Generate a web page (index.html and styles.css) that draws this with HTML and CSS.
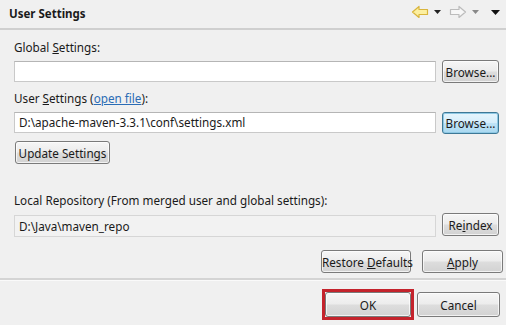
FILE: index.html
```html
<!DOCTYPE html>
<html lang="en">
<head>
<meta charset="utf-8"/>
<title>User Settings</title>
<link rel="stylesheet" href="styles.css">
</head>
<body>
<div class="dialog">
  <div class="header">
    <span class="title">User Settings</span>
    <div class="nav">
      <svg width="18" height="14" viewBox="0 0 18 14"><path d="M1.5 7 L8 1.5 V4.5 H16.5 V9.5 H8 V12.5 Z" fill="#fcefa0" stroke="#d9b53c" stroke-width="1.2" stroke-linejoin="round"/></svg>
      <svg class="drop" width="7" height="4" viewBox="0 0 7 4"><path d="M0 0 H7 L3.5 4 Z" fill="#222"/></svg>
      <svg width="18" height="14" viewBox="0 0 18 14"><path d="M16.5 7 L10 1.5 V4.5 H1.5 V9.5 H10 V12.5 Z" fill="#f7f7f7" stroke="#bcbcbc" stroke-width="1.2" stroke-linejoin="round"/></svg>
      <svg class="drop" width="7" height="4" viewBox="0 0 7 4"><path d="M0 0 H7 L3.5 4 Z" fill="#888"/></svg>
      <svg class="drop last" width="9" height="5" viewBox="0 0 9 5"><path d="M0 0 H9 L4.5 5 Z" fill="#111"/></svg>
    </div>
  </div>

  <div class="content">
    <label class="field-label first">Global <u>S</u>ettings:</label>
    <div class="field-row">
      <div class="text-field"></div>
      <button class="btn browse">Browse...</button>
    </div>

    <label class="field-label">User <u>S</u>ettings (<a href="#">open file</a>):</label>
    <div class="field-row">
      <div class="text-field">D:\apache-maven-3.3.1\conf\settings.xml</div>
      <button class="btn browse focused">Browse...</button>
    </div>

    <button class="btn update">Update Settings</button>

    <label class="field-label repo-label">Local Repository (From merged user and global settings):</label>
    <div class="field-row">
      <div class="text-field readonly">D:\Java\maven_repo</div>
      <button class="btn browse">Re<u>i</u>ndex</button>
    </div>

    <div class="defaults">
      <button class="btn restore">Restore <u>D</u>efaults</button>
      <button class="btn apply"><u>A</u>pply</button>
    </div>
  </div>

  <div class="footer">
    <div class="ok-frame"><button class="btn ok">OK</button></div>
    <button class="btn cancel">Cancel</button>
  </div>
</div>
</body>
</html>
```

FILE: styles.css
```css
body {
  margin: 0;
  background: #f0f0f0;
  font-family: 'Noto Sans', sans-serif;
  font-size: 11.7px;
  color: #1a1a1a;
}

.dialog {
  width: 506px;
  height: 325px;
  overflow: hidden;
}

.header {
  height: 30px;
  box-sizing: border-box;
  display: flex;
  align-items: center;
  justify-content: space-between;
  padding: 0 2px 0 9px;
  border-bottom: 2px solid #cfcfcf;
}

.title {
  font-weight: bold;
  font-size: 11.5px;
  margin-top: -2px;
}

.nav {
  display: flex;
  align-items: center;
  gap: 4px;
  margin-top: -4px;
}

.nav .drop {
  margin: 0 4px 0 1px;
}

.nav .last {
  margin-left: 4px;
}

.content {
  padding: 0 6px 0 14px;
  display: flex;
  flex-direction: column;
}

.field-label {
  display: block;
  height: 16px;
  line-height: 16px;
  margin-top: 7px;
}

.field-label.first {
  margin-top: 9px;
}

.field-label a {
  color: #2a6cb5;
  text-decoration: underline;
}

.field-row {
  display: flex;
  align-items: flex-start;
  margin-top: 6px;
  gap: 6px;
}

.text-field {
  flex: 1;
  height: 21px;
  box-sizing: border-box;
  background: #fff;
  border: 1px solid #c9c9c9;
  border-top-color: #b5b5b5;
  padding: 0 4px;
  line-height: 19px;
  white-space: nowrap;
}

.text-field.readonly {
  background: #f2f2f2;
  border-color: #d6d6d6;
  height: 22px;
  line-height: 20px;
  margin-top: 1px;
}

.btn {
  font-family: inherit;
  font-size: 11.7px;
  color: #1a1a1a;
  height: 23px;
  padding: 0 6px;
  white-space: nowrap;
  border: 1px solid #7a7a7a;
  border-radius: 3px;
  background: linear-gradient(#f6f6f6 0%, #ececec 48%, #dddddd 52%, #d2d2d2 100%);
  box-shadow: inset 0 0 0 1px rgba(255,255,255,0.7);
  cursor: pointer;
}

.browse {
  width: 57px;
  padding: 0;
  margin-top: -1px;
  margin-right: 1px;
}

.browse.focused {
  background: linear-gradient(#e6f5fd 0%, #d6eefb 48%, #bfe3f6 52%, #a9d8f0 100%);
  border-color: #3d7896;
  box-shadow: inset 0 0 0 1px #8ec8e4;
  height: 22px;
  margin-top: 0;
}

.update {
  align-self: flex-start;
  width: 95px;
  padding: 0;
  margin: 7px 0 0 1px;
}

.repo-label {
  margin-top: 28px;
}

.defaults {
  display: flex;
  justify-content: flex-end;
  gap: 11px;
  margin-top: 13px;
  margin-right: -3px;
}

.restore {
  width: 90px;
  padding: 0;
}

.apply {
  width: 81px;
}

.footer {
  margin-top: 5px;
  border-top: 2px solid #d4d4d4;
  box-shadow: inset 0 1px 0 #fafafa;
  display: flex;
  justify-content: flex-end;
  align-items: center;
  gap: 3px;
  padding: 9px 6px 0 0;
}

.ok-frame {
  border: 3px solid #c4232c;
  display: flex;
}

.ok {
  width: 86px;
  height: 25px;
}

.cancel {
  width: 83px;
  height: 25px;
}
```
